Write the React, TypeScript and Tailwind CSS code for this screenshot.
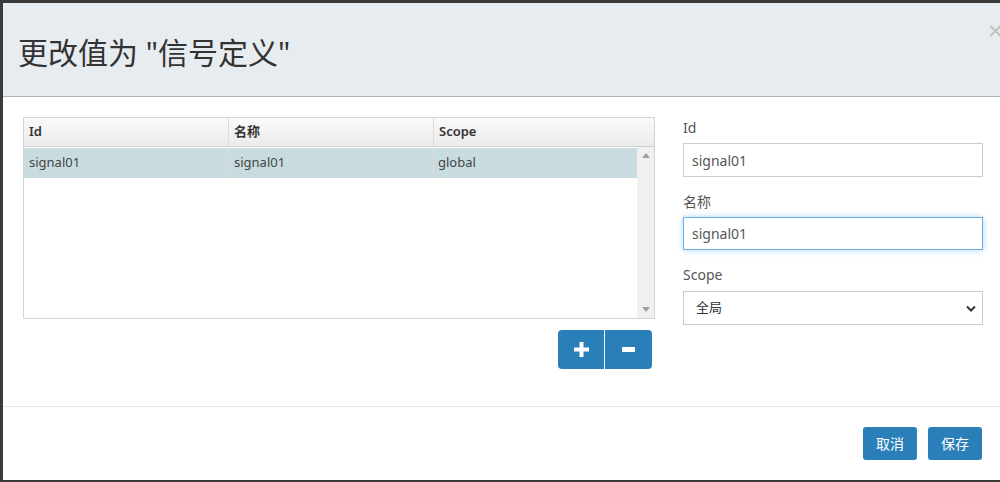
import React from "react";

const font = { fontFamily: '"Noto Sans", "Noto Sans CJK SC", sans-serif' };

export default function App() {
  return (
    <div className="w-[1000px] h-[482px] bg-[#3a3a3a] pl-[3px] pt-[3px] pb-[2px] overflow-hidden" style={font}>
      <div className="w-[1010px] h-[477px] bg-white flex flex-col">
        {/* header */}
        <div className="h-[94px] bg-[#e7ecf0] border-b border-[#aab2bb] relative flex items-center pl-[15px]">
          <h1 className="text-[30px] text-[#333] font-normal leading-none mt-[6px]">更改值为 "信号定义"</h1>
          <span className="absolute left-[985px] top-[14px] text-[26px] text-[#c0c0c0] leading-none">×</span>
        </div>
        {/* body */}
        <div className="h-[310px] border-b border-[#e5e5e5] flex pt-[20px] pl-[20px]">
          <div className="w-[632px] flex flex-col">
            <div className="h-[202px] border border-[#d4d4d4] flex flex-col text-[13px] text-[#333]">
              <div className="h-[29px] flex bg-gradient-to-b from-[#fafafa] to-[#ebebeb] border-b border-[#d0d0d0] font-semibold">
                <div className="w-[205px] border-r border-[#ddd] pl-[5px] flex items-center">Id</div>
                <div className="w-[205px] border-r border-[#ddd] pl-[5px] flex items-center">名称</div>
                <div className="flex-1 pl-[5px] flex items-center">Scope</div>
              </div>
              <div className="flex flex-1 pt-[1px]">
                <div className="flex-1">
                  <div className="h-[30px] flex bg-[#c8dce0] text-[#444]">
                    <div className="w-[205px] border-r border-[#e0d8d8] pl-[5px] flex items-center">signal01</div>
                    <div className="w-[205px] border-r border-[#e0d8d8] pl-[5px] flex items-center">signal01</div>
                    <div className="flex-1 pl-[4px] flex items-center">global</div>
                  </div>
                </div>
                <div className="w-[17px] bg-[#f0f0f0] flex flex-col justify-between items-center py-[6px] -mt-[1px]">
                  <svg width="8" height="5" viewBox="0 0 8 5"><path d="M0 5 L4 0 L8 5 Z" fill="#a0a0a0" /></svg>
                  <svg width="8" height="5" viewBox="0 0 8 5"><path d="M0 0 L4 5 L8 0 Z" fill="#a0a0a0" /></svg>
                </div>
              </div>
            </div>
            <div className="flex justify-end mt-[11px] pr-[3px]">
              <div className="flex rounded-[4px] overflow-hidden">
                <button className="w-[47px] h-[39px] bg-[#2a7fb8] text-white flex items-center justify-center border-r border-white">
                  <svg width="15" height="15" viewBox="0 0 15 15"><path d="M5.5 0h4v5.5H15v4H9.5V15h-4V9.5H0v-4h5.5z" fill="#fff" /></svg>
                </button>
                <button className="w-[47px] h-[39px] bg-[#2a7fb8] text-white flex items-center justify-center">
                  <svg width="13" height="5" viewBox="0 0 13 5"><rect width="13" height="5" fill="#fff" /></svg>
                </button>
              </div>
            </div>
          </div>
          <div className="ml-[28px] w-[300px] flex flex-col text-[14px] text-[#555]">
            <label className="h-[20px] leading-[20px] mt-[1px]">Id</label>
            <div className="mt-[5px] h-[34px] border border-[#ccc] flex items-center px-[8px] text-[#555]">signal01</div>
            <label className="h-[20px] leading-[20px] mt-[15px]">名称</label>
            <div className="mt-[5px] h-[33px] border border-[#66afe9] shadow-[0_0_6px_rgba(102,175,233,0.5)] flex items-center px-[8px] text-[#555]">signal01</div>
            <label className="h-[20px] leading-[20px] mt-[15px]">Scope</label>
            <div className="mt-[6px] h-[34px] border border-[#ccc] flex items-center justify-between pl-[12px] pr-[6px] text-[#333] text-[13px]">
              <span>全局</span>
              <svg width="10" height="7" viewBox="0 0 10 7"><path d="M1 1.5 L5 5.5 L9 1.5" stroke="#333" strokeWidth="2" fill="none" /></svg>
            </div>
          </div>
        </div>
        {/* footer */}
        <div className="flex-1 flex items-start pl-[860px] pt-[20px] gap-[11px]">
          <button className="w-[54px] h-[33px] rounded-[3px] bg-[#2a7fb8] text-white text-[14px]">取消</button>
          <button className="w-[54px] h-[33px] rounded-[3px] bg-[#2a7fb8] text-white text-[14px]">保存</button>
        </div>
      </div>
    </div>
  );
}
